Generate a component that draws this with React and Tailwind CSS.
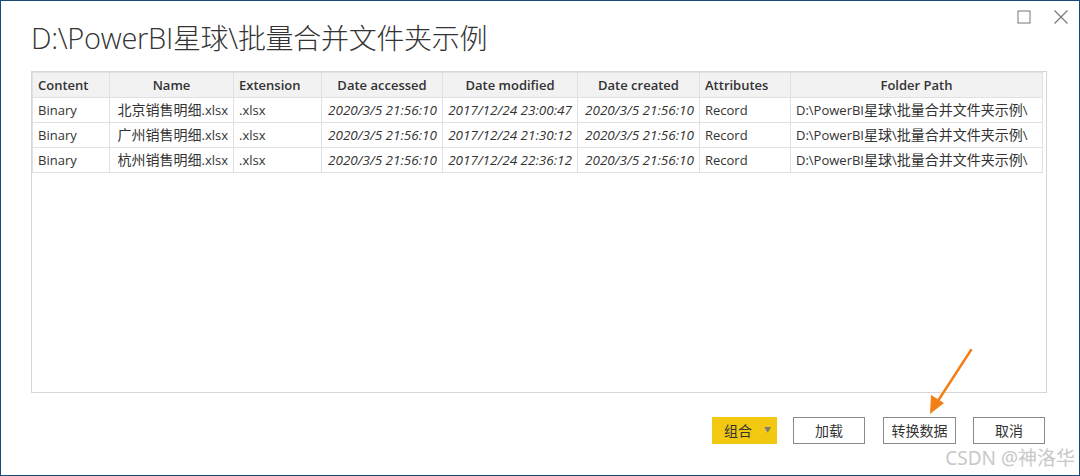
import React from 'react'

const cols = [
  { label: 'Content', w: 'w-[77px]', head: 'text-left' },
  { label: 'Name', w: 'w-[124px]', head: 'text-center' },
  { label: 'Extension', w: 'w-[88px]', head: 'text-left' },
  { label: 'Date accessed', w: 'w-[121px]', head: 'text-center' },
  { label: 'Date modified', w: 'w-[135px]', head: 'text-center' },
  { label: 'Date created', w: 'w-[122px]', head: 'text-center' },
  { label: 'Attributes', w: 'w-[91px]', head: 'text-left' },
  { label: 'Folder Path', w: 'w-[252px]', head: 'text-center' },
]

const path = 'D:\\PowerBI星球\\批量合并文件夹示例\\'

const rows = [
  ['Binary', '北京销售明细.xlsx', '.xlsx', '2020/3/5 21:56:10', '2017/12/24 23:00:47', '2020/3/5 21:56:10', 'Record', path],
  ['Binary', '广州销售明细.xlsx', '.xlsx', '2020/3/5 21:56:10', '2017/12/24 21:30:12', '2020/3/5 21:56:10', 'Record', path],
  ['Binary', '杭州销售明细.xlsx', '.xlsx', '2020/3/5 21:56:10', '2017/12/24 22:36:12', '2020/3/5 21:56:10', 'Record', path],
]

// CJK glyphs sit a bit larger than the latin text in the original dialog
function Mixed({ text, cjk }) {
  const parts = text.split(/([\u4e00-\u9fff]+)/)
  return parts.map((p, i) =>
    /[\u4e00-\u9fff]/.test(p) ? (
      <span key={i} className={cjk}>
        {p}
      </span>
    ) : (
      p
    )
  )
}

function Cell({ value, idx }) {
  const isDate = idx >= 3 && idx <= 5
  return (
    <td
      className={`h-[25px] border border-[#e1e1e1] px-[5px] whitespace-nowrap overflow-hidden ${
        isDate ? 'text-right italic text-[13.5px]' : idx === 1 ? 'text-right' : 'text-left'
      }`}
    >
      <Mixed text={value} cjk="text-[14px]" />
    </td>
  )
}

export default function App() {
  return (
    <div className="relative flex h-[476px] w-[1080px] flex-col overflow-hidden border border-[#164a78] bg-white text-[#333] [font-family:'Open_Sans','Noto_Sans_CJK_SC',sans-serif]">
      {/* window buttons */}
      <div className="absolute right-[10px] top-[8px] flex items-center gap-[22px] text-[#777]">
        <svg width="14" height="14" viewBox="0 0 14 14">
          <rect x="1" y="1" width="12" height="12" fill="none" stroke="currentColor" strokeWidth="1" />
        </svg>
        <svg width="16" height="16" viewBox="0 0 16 16">
          <path d="M1.5 1.5 L14.5 14.5 M14.5 1.5 L1.5 14.5" stroke="currentColor" strokeWidth="1.2" />
        </svg>
      </div>

      <h1 className="ml-[30px] mt-[17px] text-[29px] font-light leading-[40px] text-[#333] tracking-[-0.3px]">
        <Mixed text="D:\PowerBI星球\批量合并文件夹示例" cjk="text-[28px]" />
      </h1>

      <div className="ml-[30px] mt-[13px] h-[322px] w-[1016px] border border-[#d6d6d6]">
        <table className="table-fixed border-collapse text-[13px] leading-[18px]">
          <thead>
            <tr className="bg-[#f2f2f2]">
              {cols.map((c) => (
                <th
                  key={c.label}
                  className={`${c.w} h-[25px] border border-[#e1e1e1] px-[5px] font-semibold ${c.head}`}
                >
                  {c.label}
                </th>
              ))}
            </tr>
          </thead>
          <tbody>
            {rows.map((r, i) => (
              <tr key={i}>
                {r.map((v, j) => (
                  <Cell key={j} value={v} idx={j} />
                ))}
              </tr>
            ))}
          </tbody>
        </table>
      </div>

      <div className="mr-[34px] mt-[24px] flex justify-end text-[13px]">
        <button className="flex h-[27px] w-[65px] items-center justify-center gap-[12px] bg-[#f2c811] pl-[6px] text-[#333]">
          <span className="text-[14px]">组合</span>
          <span className="text-[7px] text-[#7a7a7a]">▼</span>
        </button>
        <button className="ml-4 h-[27px] w-[72px] border border-[#8a8a8a] bg-white text-[14px]">加载</button>
        <button className="ml-[18px] h-[27px] w-[73px] border border-[#8a8a8a] bg-white text-[14px]">转换数据</button>
        <button className="ml-[17px] h-[27px] w-[72px] border border-[#8a8a8a] bg-white text-[14px]">取消</button>
      </div>

      {/* annotation arrow */}
      <svg className="absolute left-[920px] top-[344px]" width="60" height="74" viewBox="0 0 60 74">
        <path d="M50 5 L13 62" stroke="#f47f17" strokeWidth="2.5" strokeLinecap="round" />
        <path d="M9 69 L10 50 L23 58 Z" fill="#f47f17" />
      </svg>

      <div className="absolute bottom-[3px] right-[4px] text-[19px] text-[#c8c8c8] [font-family:'Noto_Sans','Noto_Sans_CJK_SC',sans-serif]">
        CSDN @神洛华
      </div>
    </div>
  )
}
